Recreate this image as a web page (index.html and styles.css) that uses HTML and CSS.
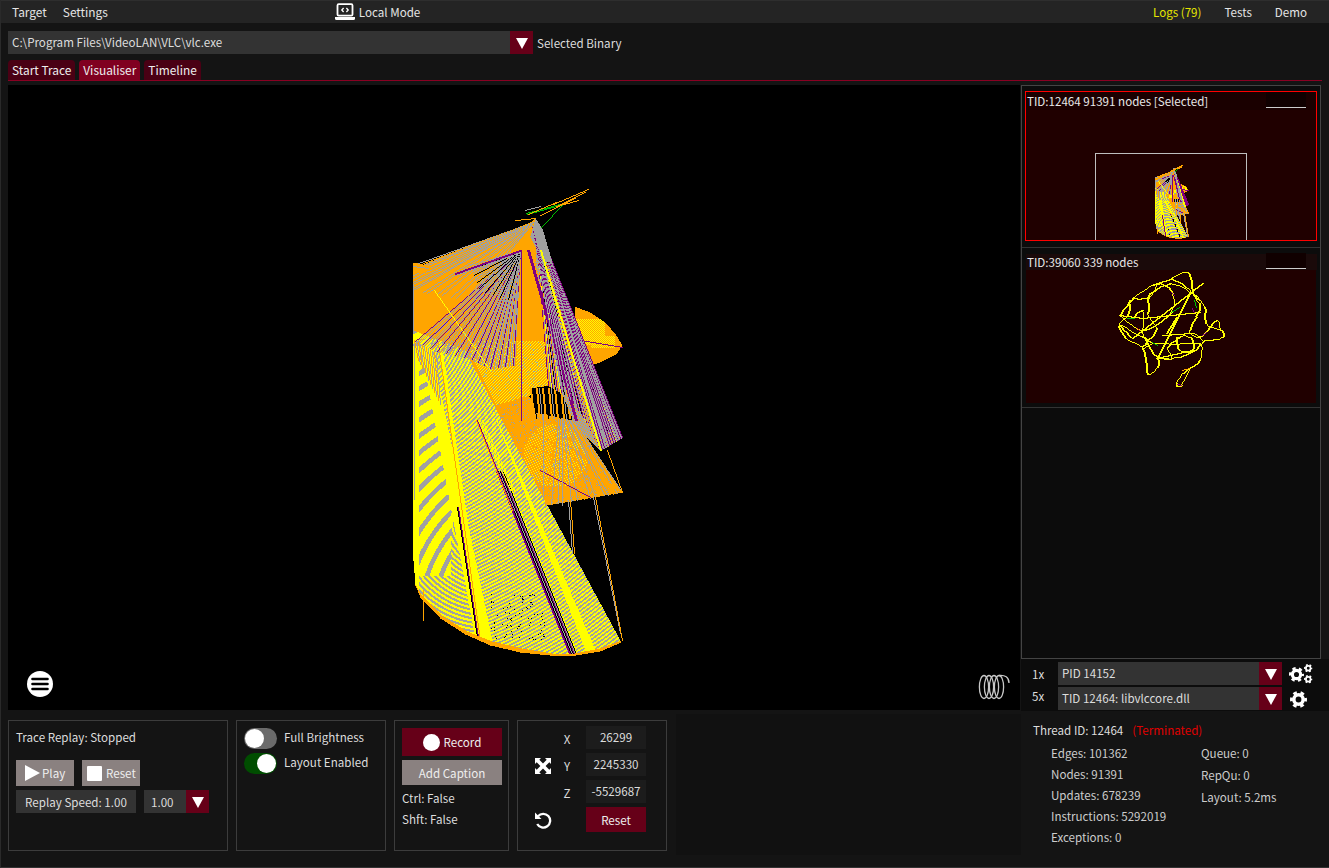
FILE: index.html
```html
<!DOCTYPE html>
<html lang="en">
<head>
<meta charset="utf-8">
<title>Trace Visualiser</title>
<link rel="stylesheet" href="styles.css">
</head>
<body>
<svg class="defs" width="0" height="0">
  <symbol id="cog" viewBox="0 0 24 24">
    <circle cx="12" cy="12" r="6.6" fill="none" stroke="#fff" stroke-width="5"/>
    <circle cx="12" cy="12" r="10" fill="none" stroke="#fff" stroke-width="4" stroke-dasharray="5.2 5.27" stroke-dashoffset="2.6"/>
  </symbol>
  <symbol id="caret" viewBox="0 0 12 12">
    <path d="M0 1H12L6 12Z" fill="#fff"/>
  </symbol>
</svg>
<div class="app">
  <header class="menubar">
    <span class="menu-item menu-target">Target</span>
    <span class="menu-item menu-settings">Settings</span>
    <span class="mode">
      <svg class="laptop" viewBox="0 0 20 18" width="20" height="18">
        <rect x="2.5" y="1.2" width="15" height="11.5" rx="1.2" fill="none" stroke="#fff" stroke-width="1.8"/>
        <path d="M0 14H20V15.5Q20 17 18.5 17H1.5Q0 17 0 15.5Z" fill="#fff"/>
        <path d="M8.6 5 6.8 7 8.6 9M11.4 5 13.2 7 11.4 9" fill="none" stroke="#fff" stroke-width="1.3"/>
      </svg>
      <span>Local Mode</span>
    </span>
    <span class="menu-right">
      <span class="menu-item logs">Logs (79)</span>
      <span class="menu-item">Tests</span>
      <span class="menu-item">Demo</span>
    </span>
  </header>

  <div class="binary-row">
    <div class="combo combo-binary">
      <span class="combo-value">C:\Program Files\VideoLAN\VLC\vlc.exe</span>
      <span class="combo-arrow"><svg width="12" height="12"><use href="#caret"/></svg></span>
    </div>
    <span class="binary-label">Selected Binary</span>
  </div>

  <nav class="tabs">
    <span class="tab">Start Trace</span>
    <span class="tab tab-active">Visualiser</span>
    <span class="tab">Timeline</span>
  </nav>

  <main class="workspace">
    <section class="left">
      <div class="viewport">
        <canvas id="graph" width="1012" height="625"></canvas>
        <svg class="overlay-menu" viewBox="0 0 28 28" width="28" height="28">
          <circle cx="14" cy="14" r="13" fill="#fff"/>
          <path d="M6.5 9H21.5M6.5 14H21.5M6.5 19H21.5" stroke="#000" stroke-width="2.6" stroke-linecap="round"/>
        </svg>
        <svg class="overlay-coil" viewBox="0 0 32 26" width="32" height="26">
          <g fill="none" stroke="#c8c8c8" stroke-width="1.3">
            <ellipse cx="6" cy="13" rx="4.6" ry="11.5"/>
            <ellipse cx="11" cy="13" rx="4.6" ry="11.5"/>
            <ellipse cx="16" cy="13" rx="4.6" ry="11.5"/>
            <ellipse cx="21" cy="13" rx="4.6" ry="11.5"/>
            <path d="M21 1.5C27 1 31 3 31 9"/>
          </g>
        </svg>
      </div>
      <div class="controls">
        <div class="group group-replay">
          <div class="replay-title">Trace Replay: Stopped</div>
          <div class="replay-buttons">
            <span class="btn-grey btn-play">
              <svg viewBox="0 0 16 16" width="16" height="16"><path d="M1 0 16 8 1 16Z" fill="#fff"/></svg>Play
            </span>
            <span class="btn-grey btn-reset"><i class="stop-square"></i>Reset</span>
          </div>
          <div class="replay-speed">
            <span class="speed-label">Replay Speed: 1.00</span>
            <span class="combo combo-speed">
              <span class="combo-value">1.00</span>
              <span class="combo-arrow"><svg width="12" height="12"><use href="#caret"/></svg></span>
            </span>
          </div>
        </div>
        <div class="group group-toggles">
          <div class="toggle-row">
            <span class="toggle"><i class="knob"></i></span><span class="toggle-text">Full Brightness</span>
          </div>
          <div class="toggle-row">
            <span class="toggle toggle-on"><i class="knob"></i></span><span class="toggle-text">Layout Enabled</span>
          </div>
        </div>
        <div class="group group-record">
          <div class="btn-record"><i class="dot"></i>Record</div>
          <div class="btn-caption">Add Caption</div>
          <div class="key-state">Ctrl: False</div>
          <div class="key-state">Shft: False</div>
        </div>
        <div class="group group-camera">
          <div class="camera-icons">
            <svg viewBox="0 0 16 16" width="16" height="16">
              <g fill="#fff">
                <path d="M0 0H6L4.3 1.7 8 5.4 11.7 1.7 10 0H16V6L14.3 4.3 10.6 8 14.3 11.7 16 10V16H10L11.7 14.3 8 10.6 4.3 14.3 6 16H0V10L1.7 11.7 5.4 8 1.7 4.3 0 6Z"/>
              </g>
            </svg>
            <svg viewBox="0 0 18 18" width="18" height="18">
              <path d="M4 5.2A6.9 6.9 0 1 1 3.2 13" fill="none" stroke="#fff" stroke-width="2.3"/>
              <path d="M1 1.5V8H7.5Z" fill="#fff"/>
            </svg>
          </div>
          <div class="camera-grid">
            <span class="axis">X</span><span class="coord">26299</span>
            <span class="axis">Y</span><span class="coord">2245330</span>
            <span class="axis">Z</span><span class="coord">-5529687</span>
            <span></span><span class="btn-cam-reset">Reset</span>
          </div>
        </div>
        <div class="dark-box"></div>
      </div>
    </section>

    <aside class="right">
      <div class="thread-panel">
        <article class="thumb thumb-selected">
          <div class="thumb-head"><span>TID:12464 91391 nodes [Selected]</span><i class="thumb-mini"></i></div>
          <canvas id="thumb1" width="290" height="130"></canvas>
        </article>
        <article class="thumb thumb-plain">
          <div class="thumb-head"><span>TID:39060 339 nodes</span><i class="thumb-mini"></i></div>
          <canvas id="thumb2" width="290" height="133"></canvas>
        </article>
      </div>
      <div class="selects">
        <div class="select-row">
          <span class="count">1x</span>
          <div class="combo combo-thread">
            <span class="combo-value">PID 14152</span>
            <span class="combo-arrow"><svg width="12" height="12"><use href="#caret"/></svg></span>
          </div>
          <svg class="cogs" viewBox="0 0 24 20" width="24" height="20">
            <use href="#cog" x="0" y="3" width="15" height="15"/>
            <use href="#cog" x="15" y="0" width="8.5" height="8.5"/>
            <use href="#cog" x="15" y="11" width="8.5" height="8.5"/>
          </svg>
        </div>
        <div class="select-row">
          <span class="count count-low">5x</span>
          <div class="combo combo-thread">
            <span class="combo-value">TID 12464: libvlccore.dll</span>
            <span class="combo-arrow"><svg width="12" height="12"><use href="#caret"/></svg></span>
          </div>
          <svg class="cogs" viewBox="0 0 24 20" width="24" height="20">
            <use href="#cog" x="1" y="2" width="17" height="17"/>
          </svg>
        </div>
      </div>
      <div class="stats">
        <div class="thread-line"><span>Thread ID: 12464</span><span class="terminated">(Terminated)</span></div>
        <div class="stat-cols">
          <div class="stat-col stat-main">
            <span>Edges: 101362</span>
            <span>Nodes: 91391</span>
            <span>Updates: 678239</span>
            <span>Instructions: 5292019</span>
            <span>Exceptions: 0</span>
          </div>
          <div class="stat-col stat-side">
            <span>Queue: 0</span>
            <span>RepQu: 0</span>
            <span>Layout: 5.2ms</span>
          </div>
        </div>
      </div>
    </aside>
  </main>
</div>
<script src="graph.js"></script>
</body>
</html>
```
FILE: styles.css
```css
* { box-sizing: border-box; }
html, body { margin: 0; padding: 0; }
body {
  width: 1329px;
  height: 868px;
  overflow: hidden;
  background: #141414;
  color: #e8e8e8;
  font-family: "Noto Sans CJK JP", "Noto Sans", sans-serif;
  font-size: 11.6px;
  line-height: 16px;
}
.defs { position: absolute; }
.app {
  width: 1329px;
  height: 868px;
  display: flex;
  flex-direction: column;
  border-bottom: 1px solid #333;
  border-left: 1px solid #2a2a2a;
}
.menubar {
  height: 23px;
  flex: none;
  display: flex;
  align-items: center;
  background: #242424;
  border-top: 1px solid #2e2e2e;
  padding-left: 11px;
  color: #e4e4e4;
}
.menu-target, .menu-settings { font-size: 11.9px; }
.menu-settings { margin-left: 16px; }
.mode { display: flex; align-items: center; gap: 4px; margin-left: 227px; }
.laptop { display: block; }
.menu-right { margin-left: auto; display: flex; gap: 23px; padding-right: 22px; }
.logs { color: #e6e600; }

.binary-row {
  flex: none;
  display: flex;
  align-items: center;
  height: 23px;
  margin-top: 8px;
  padding-left: 7px;
}
.combo { display: flex; background: #333; color: #ddd; height: 23px; }
.combo-value { flex: 1; padding-left: 4px; line-height: 23px; white-space: nowrap; }
.combo-arrow {
  width: 23px;
  flex: none;
  background: #660018;
  display: flex;
  align-items: center;
  justify-content: center;
}
.combo-arrow svg { display: block; }
.combo-binary { width: 525px; }
.binary-label { margin-left: 4px; color: #ddd; }

.tabs {
  flex: none;
  display: flex;
  gap: 4px;
  height: 21px;
  margin-top: 6px;
  margin-right: 7px;
  margin-left: 7px;
  border-bottom: 1px solid #8a0022;
  font-size: 11.9px;
}
.tab {
  height: 20px;
  padding: 0 4px;
  line-height: 19px;
  border-radius: 4px 4px 0 0;
  background: #4a0014;
  color: #eee;
}
.tab-active { background: #800020; }

.workspace { flex: 1; display: flex; min-height: 0; margin-top: 4px; padding-left: 7px; }
.left { width: 1012px; flex: none; display: flex; flex-direction: column; }
.viewport { position: relative; width: 1012px; height: 625px; flex: none; background: #000; }
#graph { display: block; }
.overlay-menu { position: absolute; left: 18px; top: 585px; }
.overlay-coil { position: absolute; left: 970px; top: 589px; }

.controls { flex: 1; display: flex; align-items: flex-start; gap: 8px; padding-top: 10px; }
.group { height: 131px; border: 1px solid #3c3c3c; flex: none; }
.group-replay { width: 220px; padding: 8px 7px; }
.replay-title { color: #ddd; }
.replay-buttons { display: flex; gap: 8px; margin-top: 15px; }
.btn-grey {
  display: flex;
  align-items: center;
  height: 26px;
  width: 58px;
  background: #8a8180;
  color: #eee;
}
.btn-play { padding-left: 8px; gap: 2px; }
.btn-reset { padding-left: 5px; gap: 4px; }
.stop-square { width: 15px; height: 15px; background: #fff; border-radius: 1px; }
.replay-speed { display: flex; gap: 8px; margin-top: 4px; }
.speed-label { width: 120px; height: 23px; background: #333; color: #ddd; text-align: center; line-height: 24px; }
.combo-speed { width: 65px; }
.combo-speed .combo-value { padding-left: 7px; line-height: 24px; }

.group-toggles { width: 150px; padding: 7px 7px; display: flex; flex-direction: column; gap: 4px; }
.toggle-row { display: flex; align-items: center; gap: 7px; height: 21px; color: #ddd; }
.toggle-text { margin-top: -4px; }
.toggle {
  width: 33px;
  height: 21px;
  flex: none;
  border-radius: 11px;
  background: #6b6b6b;
  display: flex;
  align-items: center;
  padding-left: 1px;
}
.toggle-on { background: #004d00; justify-content: flex-end; padding-left: 0; padding-right: 1px; }
.knob { width: 19px; height: 19px; border-radius: 50%; background: #fff; display: block; }

.group-record { width: 115px; padding: 7px 6px 7px 7px; color: #ddd; }
.btn-record {
  height: 28px;
  background: #660018;
  color: #eee;
  display: flex;
  align-items: center;
  justify-content: center;
  gap: 4px;
}
.dot { width: 17px; height: 17px; border-radius: 50%; background: #fff; }
.btn-caption { height: 25px; margin-top: 4px; background: #8a8180; color: #eee; text-align: center; line-height: 26px; }
.key-state { height: 21px; line-height: 21px; }
.btn-caption + .key-state { margin-top: 3px; }

.group-camera { width: 150px; display: flex; padding: 5px 0 0 17px; }
.camera-icons { width: 30px; display: flex; flex-direction: column; align-items: flex-start; }
.camera-icons svg:first-child { margin-top: 32px; }
.camera-icons svg:last-child { margin-top: 37px; margin-left: -1px; }
.camera-grid {
  display: grid;
  grid-template-columns: 38px 60px;
  grid-auto-rows: 23px;
  row-gap: 4px;
  margin-left: -17px;
}
.axis { color: #ddd; line-height: 23px; text-align: center; padding-top: 2px; }
.coord { background: #1c1c1c; text-align: center; line-height: 23px; color: #ddd; }
.btn-cam-reset { height: 25px; background: #660018; color: #eee; text-align: center; line-height: 26px; }
.dark-box { width: 345px; height: 141px; margin-top: -6px; margin-left: 1px; background: #111; flex: none; }

.right { width: 309px; flex: none; margin-left: 1px; display: flex; flex-direction: column; }
.thread-panel {
  width: 300px;
  height: 574px;
  border: 1px solid #444;
  background: #0c0c0c;
  padding-top: 5px;
}
.thumb { margin-left: 3px; }
.thumb canvas { display: block; }
.thumb-selected { border: 1px solid #f00; width: 292px; height: 150px; background: #200000; }
.thumb-plain { height: 161px; margin-top: 6px; margin-left: 0; width: 298px; border-top: 1px solid #333; border-bottom: 1px solid #333; padding: 6px 3px 0 4px; }
.thumb-plain canvas { background: #200000; }
.thumb-head {
  height: 18px;
  display: flex;
  align-items: center;
  justify-content: space-between;
  padding: 0 10px 0 1px;
  background: #1a0000;
  color: #e8e8e8;
}
.thumb-plain .thumb-head { height: 16px; background: #1a0a0a; padding: 0 11px 0 1px; }
.thumb-mini { width: 40px; height: 16px; background: #100000; border-bottom: 1px solid #ccc; margin-top: -2px; }
.selects { background: #0c0c0c; padding-top: 2px; height: 52px; flex: none; }
.select-row { display: flex; align-items: center; height: 25px; }
.count { width: 37px; padding-left: 11px; color: #ddd; margin-top: 1px; }
.count-low { margin-top: -5px; }
.combo-thread { width: 224px; }
.cogs { margin-left: 7px; }
.stats { flex: 1; padding: 11px 12px; color: #ccc; }
.thread-line { display: flex; gap: 9px; color: #ddd; }
.terminated { color: #e00000; }
.stat-cols { display: flex; padding-left: 18px; margin-top: 7px; }
.stat-col { display: flex; flex-direction: column; }
.stat-main { width: 150px; gap: 5px; }
.stat-side { gap: 6px; }
```
FILE: graph.js
```js
(function () {
  var O = [255, 165, 0], Y = [255, 255, 0], G = [160, 160, 160], P = [128, 0, 128],
      N = [0, 190, 0], K = [0, 0, 0], R = [230, 30, 30];

  function Raster(id, ox, oy, s) {
    var cv = document.getElementById(id);
    this.ctx = cv.getContext('2d');
    this.w = cv.width; this.h = cv.height;
    this.img = this.ctx.createImageData(this.w, this.h);
    this.ox = ox; this.oy = oy; this.s = s;
  }
  Raster.prototype.put = function (x, y, c) {
    if (x < 0 || y < 0 || x >= this.w || y >= this.h) return;
    var i = (y * this.w + x) * 4, d = this.img.data;
    d[i] = c[0]; d[i + 1] = c[1]; d[i + 2] = c[2]; d[i + 3] = 255;
  };
  Raster.prototype.line = function (x0, y0, x1, y1, c) {
    var s = this.s;
    x0 = Math.round((x0 - this.ox) * s); y0 = Math.round((y0 - this.oy) * s);
    x1 = Math.round((x1 - this.ox) * s); y1 = Math.round((y1 - this.oy) * s);
    var dx = Math.abs(x1 - x0), dy = Math.abs(y1 - y0), sx = x0 < x1 ? 1 : -1, sy = y0 < y1 ? 1 : -1, e = dx - dy;
    for (;;) {
      this.put(x0, y0, c);
      if (x0 === x1 && y0 === y1) break;
      var e2 = 2 * e;
      if (e2 > -dy) { e -= dy; x0 += sx; }
      if (e2 < dx) { e += dx; y0 += sy; }
    }
  };
  function inside(p, x, y) {
    var r = false;
    for (var i = 0, j = p.length - 1; i < p.length; j = i++) {
      if ((p[i][1] > y) !== (p[j][1] > y) &&
          x < (p[j][0] - p[i][0]) * (y - p[i][1]) / (p[j][1] - p[i][1]) + p[i][0]) r = !r;
    }
    return r;
  }
  Raster.prototype.poly = function (pts, shade) {
    var minx = 1e9, miny = 1e9, maxx = -1e9, maxy = -1e9, s = this.s;
    pts.forEach(function (p) {
      minx = Math.min(minx, p[0]); maxx = Math.max(maxx, p[0]);
      miny = Math.min(miny, p[1]); maxy = Math.max(maxy, p[1]);
    });
    var a = Math.floor((minx - this.ox) * s), b = Math.ceil((maxx - this.ox) * s),
        c = Math.floor((miny - this.oy) * s), d = Math.ceil((maxy - this.oy) * s);
    for (var py = c; py <= d; py++) for (var px = a; px <= b; px++) {
      var x = px / s + this.ox, y = py / s + this.oy;
      if (inside(pts, x, y)) {
        var col = typeof shade === 'function' ? shade(x, y) : shade;
        if (col) this.put(px, py, col);
      }
    }
  };
  function rng(seed) {
    return function () {
      seed |= 0; seed = seed + 0x6D2B79F5 | 0;
      var t = Math.imul(seed ^ seed >>> 15, 1 | seed);
      t = t + Math.imul(t ^ t >>> 7, 61 | t) ^ t;
      return ((t ^ t >>> 14) >>> 0) / 4294967296;
    };
  }
  function fan(r, ax, ay, pts, n, pick) {
    for (var i = 0; i <= n; i++) {
      var t = i / n * (pts.length - 1), k = Math.min(Math.floor(t), pts.length - 2), f = t - k;
      var x = pts[k][0] + (pts[k + 1][0] - pts[k][0]) * f, y = pts[k][1] + (pts[k + 1][1] - pts[k][1]) * f;
      var c = pick(i);
      if (c) r.line(ax, ay, x, y, c);
    }
  }
  function dist(x, y, a, b) { var dx = x - a, dy = y - b; return Math.sqrt(dx * dx + dy * dy); }

  function drawMain(r) {
    var rand = rng(7);
    var rim = [[413, 560], [415, 585], [420, 597], [440, 618], [465, 634], [490, 645], [520, 652], [550, 655], [570, 656], [600, 651], [621, 642]];

    /* lower body with curved yellow and grey stripes */
    var body = [[413, 300], [470, 340], [547, 505], [621, 642]].concat(rim.slice().reverse());
    r.poly(body, function (x, y) {
      var bandX = 440 + 0.188 * (y - 420);
      var darkX = 510 + 0.4 * (y - 505);
      var yelX = 527 + 0.387 * (y - 500);
      if (x < 419 && y > 345) return Math.abs(x - 414) < 1 && y < 500 ? G : Y;
      if (x < bandX - 6) {
        var fine = x > 450 || y > 575;
        var d = fine ? dist(x, y, 490, 520) : dist(x, y, 560, 620);
        var w = Math.sin(d * (fine ? 1.5 : 0.48));
        return w > (fine ? 0 : -0.45) ? Y : G;
      }
      if (x < bandX + 6 + (y - 420) * 0.02) return Y;
      if (x > darkX - 1 && x < darkX + 8 && y > 470) {
        var q = (x - darkX) | 0;
        return [O, P, K, G, K, P, G, K, Y][q + 1] || G;
      }
      if (x > yelX && x < yelX + 4 + (y - 500) * 0.04) return Y;
      var s = Math.sin(dist(x, y, 350, 300) * 1.9);
      if (y > 593 && y < 640 && x > 490 && x < 545 && rand() < 0.035) return K;
      return s > 0 ? Y : G;
    });
    for (var i = 0; i < 8; i++) {
      r.line(436 + i * 0.4, 330, 480 + i * 0.6, 640, i < 2 ? O : Y);
    }
    r.line(457, 507, 477, 637, K); r.line(458, 507, 478, 637, P);
    r.line(477, 420, 513, 510, P); r.line(476, 420, 512, 510, O);
    r.line(478, 420, 510, 490, Y); r.line(480, 420, 512, 490, Y); r.line(482, 420, 514, 490, Y);
    r.line(423, 590, 423, 620, O);

    /* rim */
    var inner = [[413, 560], [415, 584], [421, 594], [441, 615], [467, 631], [492, 641], [522, 648], [552, 653], [570, 654], [600, 648], [621, 640]];
    r.poly(rim.concat(inner.slice().reverse()), O);

    /* middle orange triangle */
    var mid = [[467, 355], [510, 368], [535, 405], [575, 420], [622, 492], [547, 505]];
    r.poly(mid, function (x, y) {
      var a = (Math.floor(x) + Math.floor(y) * 2) % 5;
      if (y > 380 && x > 510 && a === 0 && dist(x, y, 555, 455) < 32) return Y;
      if (rand() < 0.08) return G;
      return O;
    });
    fan(r, 560, 400, [[545, 505], [590, 498], [622, 492]], 14, function (i) { return i % 3 ? G : O; });
    r.line(505, 410, 622, 492, O); r.line(540, 470, 590, 497, P);
    r.line(543, 400, 543, 500, G); r.line(562, 420, 562, 505, G); r.line(522, 440, 622, 492, O);
    r.line(568, 500, 572, 553, G); r.line(570, 500, 574, 553, O);
    r.line(593, 497, 620, 633, G); r.line(595, 497, 622, 640, O);
    r.line(607, 450, 622, 492, O);

    /* dish on the right */
    var dish = [[574, 306], [590, 312], [605, 322], [616, 335], [622, 345], [616, 354], [600, 362], [585, 366], [575, 366]];
    r.poly(dish, function (x, y) {
      var a = Math.floor(x) + Math.floor(y);
      if (x < 605 && y < 345 && y > 318 && a % 2) return Y;
      if (y < 348 && y > 335 && x > 590 && x < 615 && a % 2) return Y;
      return O;
    });
    r.line(580, 340, 622, 347, P);

    /* upper orange wedge */
    var upper = [[535, 218], [530, 222], [413, 268], [413, 330], [470, 352], [495, 405], [530, 395], [566, 385], [552, 262], [540, 228]];
    r.poly(upper, function (x, y) {
      if (y > 340 && x > 470 && (Math.floor(x) + Math.floor(y)) % 3 === 0) return Y;
      if (y > 340 && rand() < 0.1) return G;
      return O;
    });

    /* dark slivers under the fan */
    r.poly([[530, 388], [563, 383], [572, 420], [535, 412]], K);
    for (var b = 0; b < 13; b++) {
      r.line(530 + b * 3, 388, 533 + b * 3, 418, b % 4 === 3 ? G : b % 4 === 1 ? K : O);
      if (b % 2 === 0) r.line(531 + b * 3, 388, 534 + b * 3, 418, O);
    }

    fan(r, 533, 222, [[413, 265], [413, 290], [470, 300]], 24, function (i) { return i % 3 === 1 ? O : G; });
    fan(r, 521, 250, [[414, 342], [440, 352], [470, 358], [490, 368], [515, 365]], 80, function (i) {
      return i % 6 === 0 ? P : (i % 2 === 1 ? G : (i % 6 === 2 ? O : null));
    });
    fan(r, 521, 250, [[470, 265], [480, 290], [510, 300]], 24, function (i) { return i % 3 === 2 ? K : G; });
    r.line(520, 250, 455, 273, P); r.line(520, 251, 455, 274, P); r.line(521, 252, 455, 275, G);
    r.line(521, 250, 521, 420, P);
    r.line(434, 290, 490, 370, Y);
    r.poly([[413, 262], [432, 266], [425, 273], [413, 273]], O);
    r.line(413, 266, 428, 268, G);
    r.line(413, 285, 413, 330, G);
    for (var k = 0; k < 12; k++) r.line(414 + k * 2, 340 + k * 1.2, 418 + k * 2, 360 + k * 4, k % 2 ? G : O);

    /* right hand fan */
    r.poly([[536, 222], [622, 437], [600, 450], [575, 425], [558, 385], [535, 262]], function (x, y) {
      return (Math.floor(x * 2) + Math.floor(y)) % 5 === 0 ? O : G;
    });
    fan(r, 535, 222, [[548, 385], [575, 400], [600, 450], [622, 437]], 110, function (i) {
      var m = i % 6;
      return m === 0 ? P : m === 1 ? G : m === 2 ? O : m === 3 ? G : m === 4 ? (i % 12 === 4 ? Y : K) : G;
    });
    fan(r, 537, 224, [[600, 450], [622, 437]], 30, function (i) { return i % 3 === 0 ? P : G; });
    r.poly([[535, 218], [542, 228], [552, 262], [542, 262], [530, 236]], G);
    r.line(540, 250, 600, 450, Y); r.line(541, 250, 601, 450, Y);
    r.line(527, 250, 575, 420, P); r.line(528, 250, 576, 420, P); r.line(529, 250, 577, 420, P);
    fan(r, 532, 225, [[560, 385], [585, 420]], 10, function (i) { return i % 2 ? P : G; });

    /* tip */
    r.line(526, 213, 563, 203, N); r.line(527, 214, 563, 204, N);
    r.line(541, 227, 563, 204, N);
    r.line(525, 210, 540, 206, G);
    r.line(515, 220, 535, 218, O);
    r.line(553, 204, 588, 189, O); r.line(556, 206, 585, 192, O); r.line(560, 205, 578, 200, O);
    r.line(540, 215, 575, 198, O); r.line(528, 214, 556, 202, O);
  }

  function smooth(r, pts, c, rand) {
    for (var i = 0; i < pts.length - 1; i++) {
      var p0 = pts[Math.max(i - 1, 0)], p1 = pts[i], p2 = pts[i + 1], p3 = pts[Math.min(i + 2, pts.length - 1)];
      var lx = p1[0], ly = p1[1];
      for (var t = 1; t <= 5; t++) {
        var u = t / 5, u2 = u * u, u3 = u2 * u;
        var x = 0.5 * (2 * p1[0] + (p2[0] - p0[0]) * u + (2 * p0[0] - 5 * p1[0] + 4 * p2[0] - p3[0]) * u2 + (3 * p1[0] - p0[0] - 3 * p2[0] + p3[0]) * u3) + (rand() - 0.5) * 1.2;
        var y = 0.5 * (2 * p1[1] + (p2[1] - p0[1]) * u + (2 * p0[1] - 5 * p1[1] + 4 * p2[1] - p3[1]) * u2 + (3 * p1[1] - p0[1] - 3 * p2[1] + p3[1]) * u3) + (rand() - 0.5) * 1.2;
        r.line(lx, ly, x, y, c);
        if (i % 2 === 0) r.line(lx + 1, ly, x + 1, y, c);
        lx = x; ly = y;
      }
    }
  }

  function drawScribble(r) {
    /* points traced in a 3x view of the thumbnail */
    var rand = rng(21);
    var z = function (a) { return a.map(function (p) { return [p[0] / 3 + 1100, p[1] / 3 + 260]; }); };
    var paths = [
      [[60, 165], [100, 115], [160, 75], [215, 55], [265, 35], [280, 90], [315, 140], [320, 190], [365, 210], [370, 230], [340, 240], [310, 245], [300, 300], [250, 340], [230, 370], [245, 375], [270, 330]],
      [[100, 115], [150, 110], [180, 70], [220, 100], [215, 155], [130, 210], [60, 165]],
      [[100, 175], [130, 150], [135, 230], [175, 290], [240, 290], [300, 250], [170, 250], [130, 230], [60, 195], [80, 235], [130, 265], [145, 340], [175, 320], [175, 290]],
      [[150, 100], [145, 160], [170, 205], [130, 260], [160, 250]],
      [[290, 170], [270, 210], [300, 230], [350, 180], [365, 210]],
      [[230, 230], [240, 270], [280, 270], [270, 230], [230, 230]],
      [[190, 225], [280, 220], [310, 240]],
      [[215, 55], [260, 80], [300, 130], [290, 170]],
      [[90, 120], [85, 165], [60, 195], [95, 230]],
      [[150, 100], [210, 70], [270, 95], [300, 120]],
      [[175, 290], [215, 295], [205, 260], [240, 230]]
    ];
    paths.forEach(function (p) { smooth(r, z(p), Y, rand); });
    var straight = [
      [310, 70, 100, 235], [270, 100, 175, 290], [60, 165, 130, 175], [130, 175, 300, 155],
      [280, 270, 170, 295], [200, 220, 230, 170]
    ];
    straight.forEach(function (l) {
      var a = z([[l[0], l[1]], [l[2], l[3]]]);
      r.line(a[0][0], a[0][1], a[1][0], a[1][1], Y);
      r.line(a[0][0] + 1, a[0][1], a[1][0] + 1, a[1][1], Y);
    });
    var accents = [
      [85, 175, 105, 175, N], [215, 155, 240, 140, N], [285, 120, 290, 140, N], [160, 245, 175, 255, N],
      [280, 145, 285, 155, P], [310, 225, 320, 215, P], [215, 95, 225, 105, P], [235, 372, 245, 375, P],
      [115, 205, 120, 210, R], [250, 330, 270, 325, O]
    ];
    accents.forEach(function (l) {
      var a = z([[l[0], l[1]], [l[2], l[3]]]);
      r.line(a[0][0], a[0][1], a[1][0], a[1][1], l[4]);
    });
  }

  var main = new Raster('graph', 8, 85, 1);
  drawMain(main);
  main.ctx.putImageData(main.img, 0, 0);

  /* selected thumbnail: same graph, scaled, inside a camera frame */
  var t1s = new Raster('thumb1', 413 - (1155 - 1026) / 0.157, 189 - (165 - 110) / 0.157, 0.157);
  drawMain(t1s);
  var grey = [190, 190, 190];
  for (var x = 69; x <= 220; x++) t1s.put(x, 43, grey);
  for (var y = 43; y < 130; y++) { t1s.put(69, y, grey); t1s.put(220, y, grey); }
  t1s.ctx.putImageData(t1s.img, 0, 0);

  var t2 = new Raster('thumb2', 1027, 270, 1);
  drawScribble(t2);
  t2.ctx.putImageData(t2.img, 0, 0);
})();
```
